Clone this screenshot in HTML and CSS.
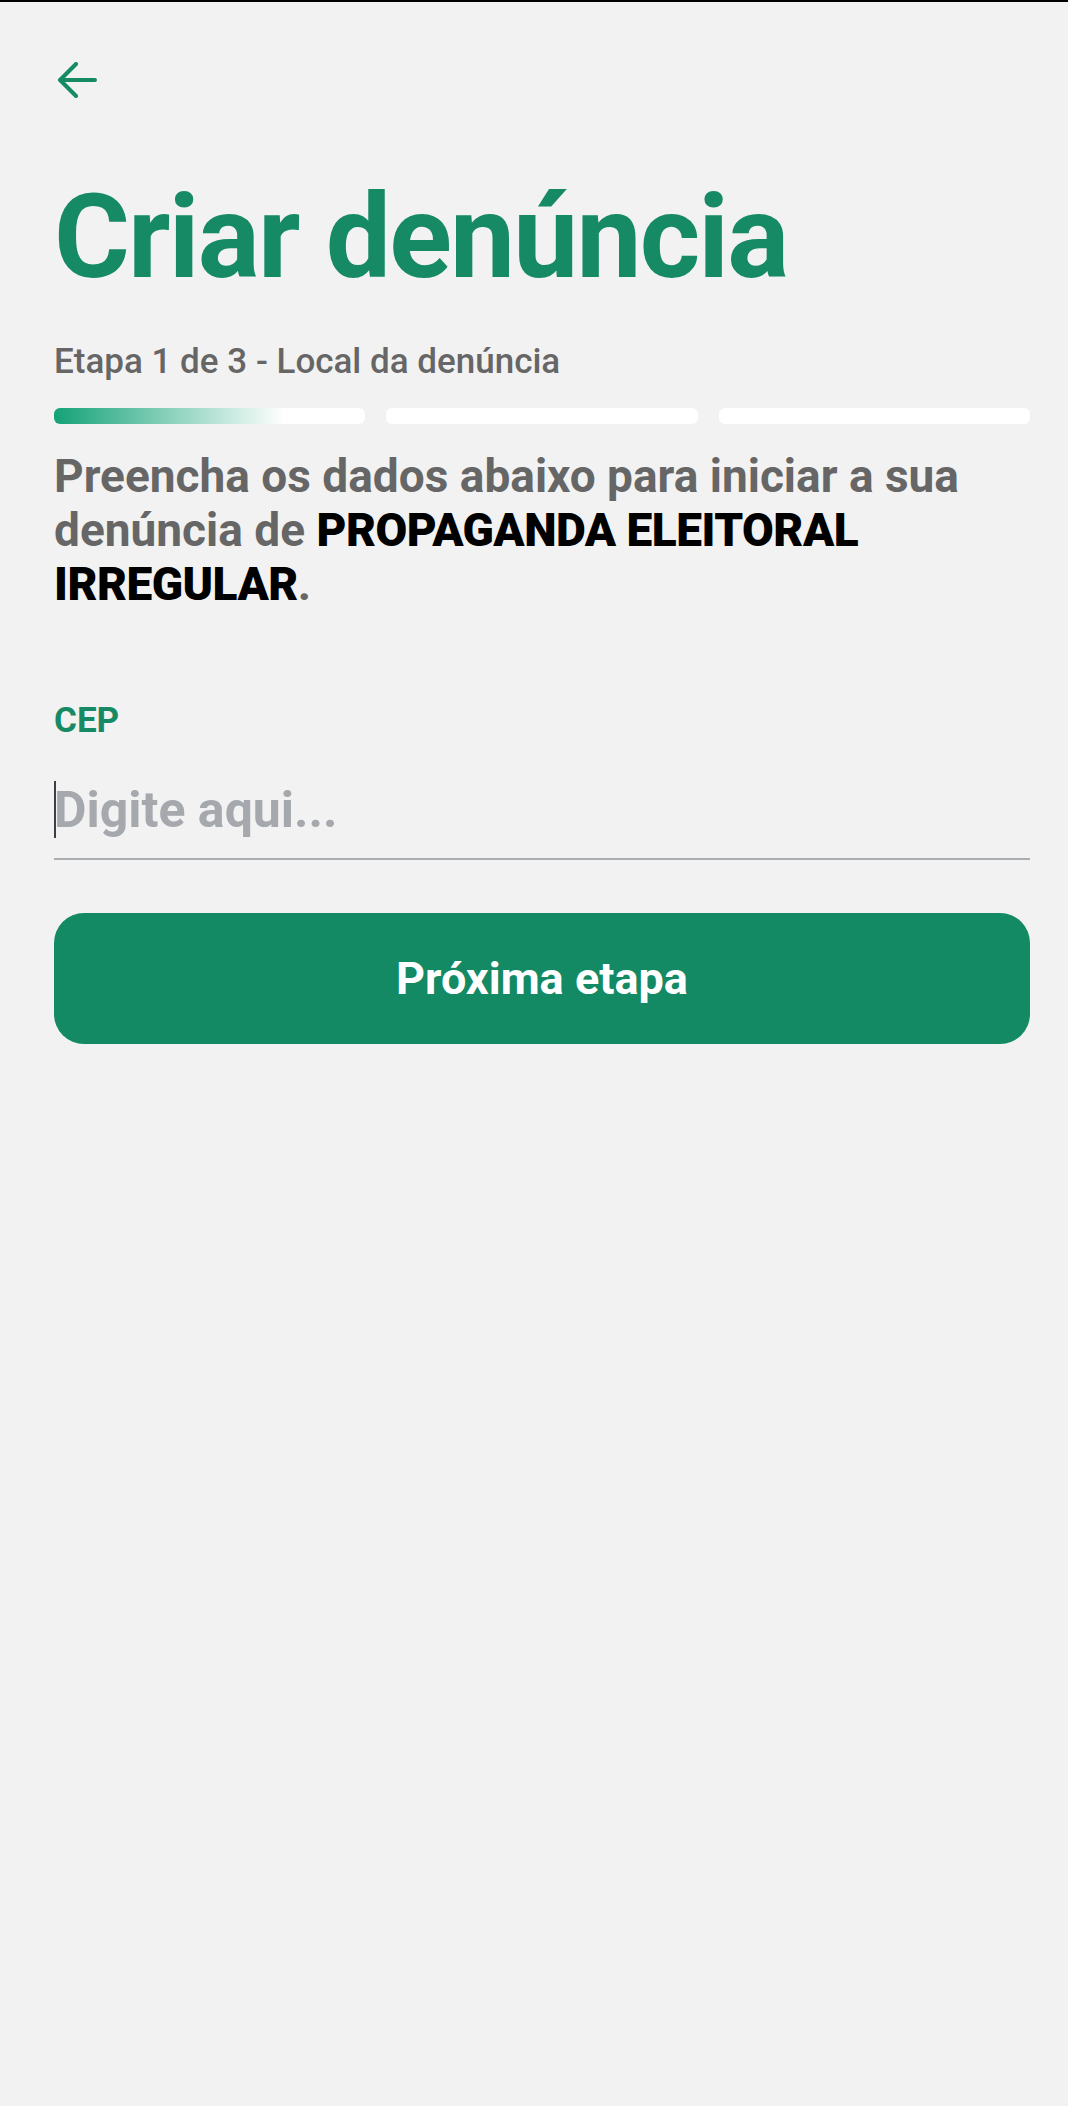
FILE: index.html
```html
<!DOCTYPE html>
<html lang="pt-BR">
    <head>
        <meta charset="UTF-8">
        <meta name="viewport" content="width=device-width, initial-scale=1.0">
        <title>Criar denúncia</title>
        <link rel="stylesheet" href="styles.css">
    </head>
    <body>
        <div class="page">
            <a href="#" class="back" aria-label="Voltar">
                <svg width="40" height="36" viewBox="0 0 40 36" fill="none" stroke="currentColor" stroke-width="4" stroke-linecap="round" stroke-linejoin="round">
                    <path d="M38 18H3M19 2L3 18l16 16"/>
                </svg>
            </a>

            <h1>Criar denúncia</h1>

            <p class="step">Etapa 1 de 3 - Local da denúncia</p>
            <div class="progress">
                <span class="bar active"></span>
                <span class="bar"></span>
                <span class="bar"></span>
            </div>

            <p class="intro">Preencha os dados abaixo para iniciar a sua denúncia de <strong>PROPAGANDA ELEITORAL</strong> <strong>IRREGULAR</strong>.</p>

            <form class="form" onsubmit="return false">
                <label for="cep">CEP</label>
                <div class="field">
                    <span class="caret"></span>
                    <input type="text" id="cep" name="cep" placeholder="Digite aqui...">
                </div>
                <button type="submit" class="next">Próxima etapa</button>
            </form>
        </div>
    </body>
</html>
```

FILE: styles.css
```css
body {
    font-family: Roboto, "Noto Sans", Arial, sans-serif;
    background-color: #f2f2f2;
    margin: 0;
    border-top: 2px solid #000;
    min-height: 2104px;
}
.page {
    padding: 60px 38px 0 54px;
}
.back {
    display: inline-block;
    margin-left: 3px;
    color: #158a65;
}
.back svg {
    display: block;
}
h1 {
    margin: 67px 0 0;
    font-size: 116px;
    line-height: 136px;
    font-weight: 700;
    letter-spacing: -1.8px;
    color: #158a65;
}
.step {
    margin: 36px 0 0;
    font-size: 35px;
    line-height: 41px;
    font-weight: 500;
    color: #666;
}
.progress {
    display: grid;
    grid-template-columns: repeat(3, 1fr);
    gap: 21px;
    margin-top: 26px;
}
.bar {
    height: 16px;
    border-radius: 6px;
    background-color: #fff;
}
.bar.active {
    background: linear-gradient(to right, #14a277 0%, #ffffff 74%);
}
.intro {
    margin: 25px 0 0;
    font-size: 46px;
    line-height: 54px;
    font-weight: 700;
    color: #666;
}
.intro strong {
    color: #000;
    letter-spacing: -0.5px;
}
.form label {
    display: block;
    margin-top: 89px;
    font-size: 35px;
    line-height: 41px;
    font-weight: 700;
    color: #158a65;
}
.field {
    position: relative;
    margin-top: 40px;
}
.caret {
    position: absolute;
    left: 0;
    top: 0;
    width: 2px;
    height: 57px;
    background-color: #3c3f44;
}
.field input {
    display: block;
    box-sizing: border-box;
    width: 100%;
    padding: 0 0 19px;
    border: none;
    border-bottom: 2px solid #a9acb0;
    background: transparent;
    font-family: inherit;
    font-size: 50px;
    font-weight: 700;
    color: #333;
    outline: none;
}
.field input::placeholder {
    color: #a5a8ac;
}
.next {
    display: block;
    width: 100%;
    height: 131px;
    margin-top: 53px;
    border: none;
    border-radius: 30px;
    background-color: #138a64;
    color: #fff;
    font-family: inherit;
    font-size: 45px;
    font-weight: 700;
    cursor: pointer;
}
```
